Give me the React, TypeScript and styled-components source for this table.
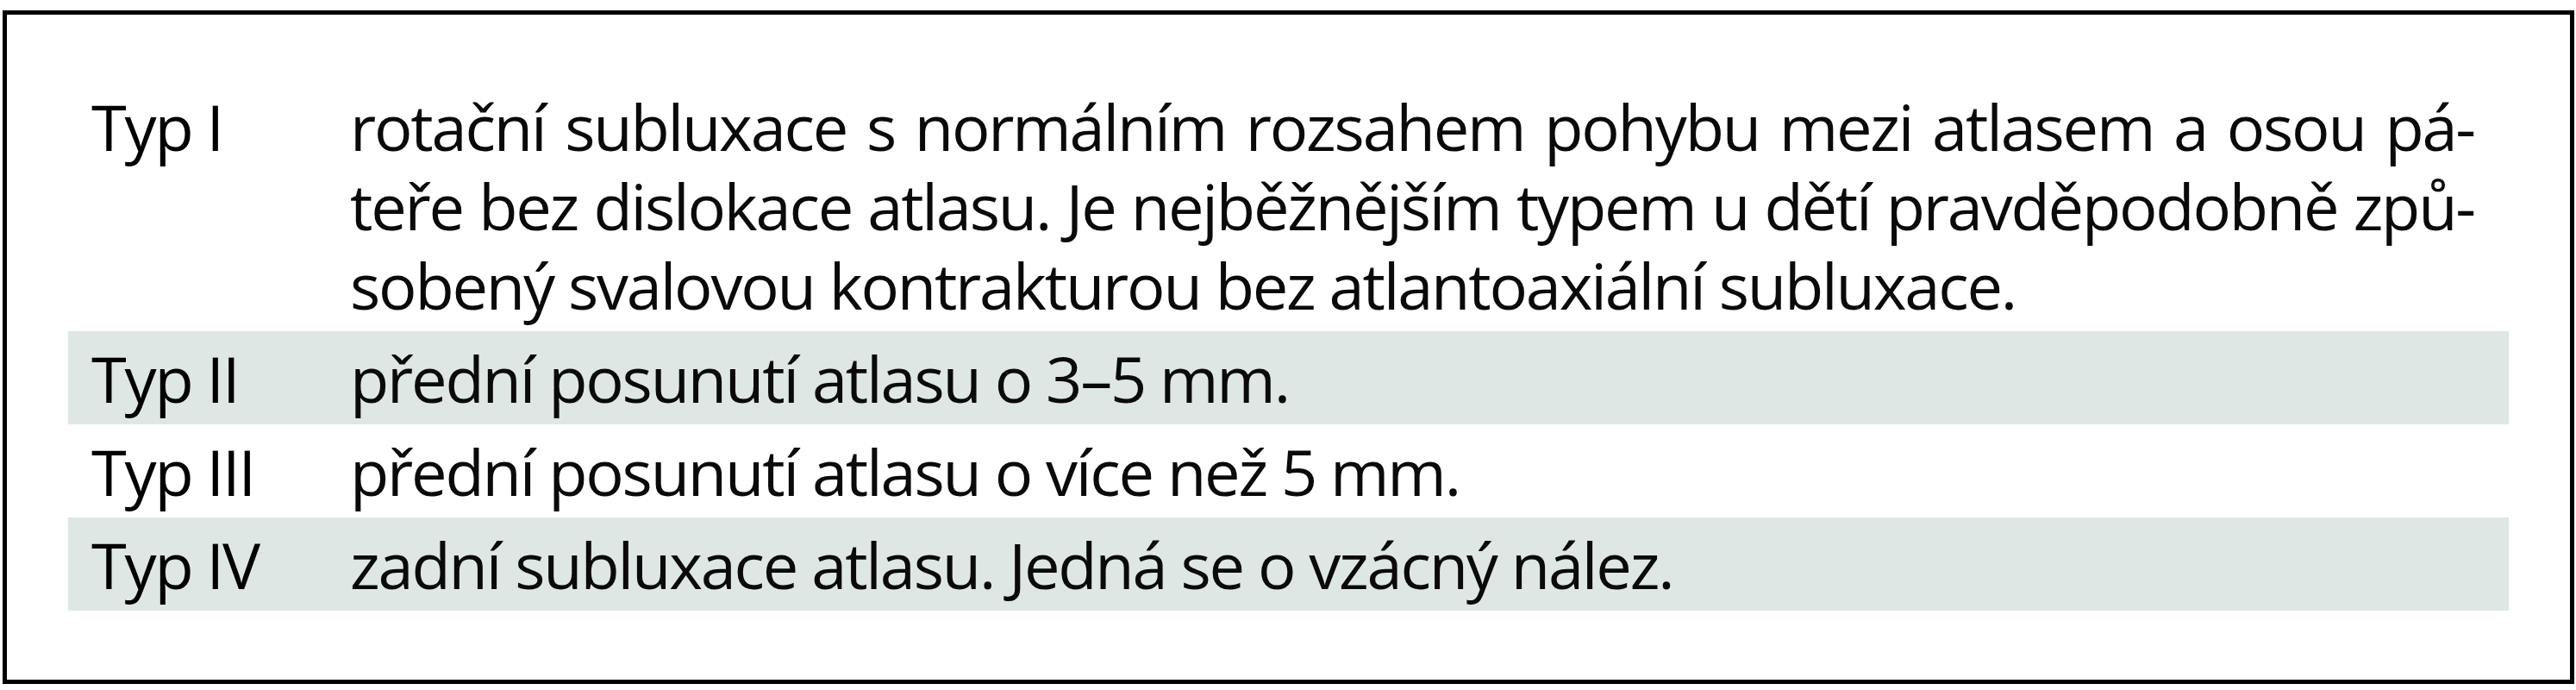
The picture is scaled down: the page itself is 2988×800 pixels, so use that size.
import React from 'react';
import styled, { createGlobalStyle } from 'styled-components';

const GlobalStyle = createGlobalStyle`
  html, body {
    margin: 0;
    padding: 0;
    background: #ffffff;
  }
  body {
    font-family: 'Open Sans', 'Noto Sans', 'DejaVu Sans', sans-serif;
    color: #000000;
  }
`;

const Frame = styled.div`
  box-sizing: border-box;
  width: 2983px;
  height: 781px;
  margin: 12px 0 0 3px;
  border: 5px solid #000000;
  padding: 75px 71px 80px;
  background: #ffffff;
`;

const Table = styled.div`
  display: flex;
  flex-direction: column;
`;

const Row = styled.div<{ $shaded?: boolean }>`
  display: grid;
  grid-template-columns: 327px 1fr;
  padding: 9px 0 7px;
  background: ${({ $shaded }) => ($shaded ? '#dfe7e5' : 'transparent')};
  font-size: 74px;
  line-height: 92px;
  letter-spacing: -2.2px;
`;

const Label = styled.div`
  padding-left: 27px;
  color: #000000;
  white-space: nowrap;
`;

const Description = styled.div`
  padding-right: 40px;
  color: #0a0a0a;
`;

const Line = styled.div<{ $justify?: boolean }>`
  white-space: nowrap;
  text-align: ${({ $justify }) => ($justify ? 'justify' : 'left')};
  text-align-last: ${({ $justify }) => ($justify ? 'justify' : 'left')};
`;

interface Entry {
  label: string;
  lines: string[];
  shaded?: boolean;
}

const entries: Entry[] = [
  {
    label: 'Typ I',
    lines: [
      'rotační subluxace s normálním rozsahem pohybu mezi atlasem a osou pá-',
      'teře bez dislokace atlasu. Je nejběžnějším typem u dětí pravděpodobně způ-',
      'sobený svalovou kontrakturou bez atlantoaxiální subluxace.',
    ],
  },
  { label: 'Typ II', lines: ['přední posunutí atlasu o 3–5 mm.'], shaded: true },
  { label: 'Typ III', lines: ['přední posunutí atlasu o více než 5 mm.'] },
  { label: 'Typ IV', lines: ['zadní subluxace atlasu. Jedná se o vzácný nález.'], shaded: true },
];

export default function App() {
  return (
    <>
      <GlobalStyle />
      <Frame>
        <Table>
          {entries.map((entry) => (
            <Row key={entry.label} $shaded={entry.shaded}>
              <Label>{entry.label}</Label>
              <Description>
                {entry.lines.map((line, i) => (
                  <Line key={i} $justify={i < entry.lines.length - 1}>
                    {line}
                  </Line>
                ))}
              </Description>
            </Row>
          ))}
        </Table>
      </Frame>
    </>
  );
}
